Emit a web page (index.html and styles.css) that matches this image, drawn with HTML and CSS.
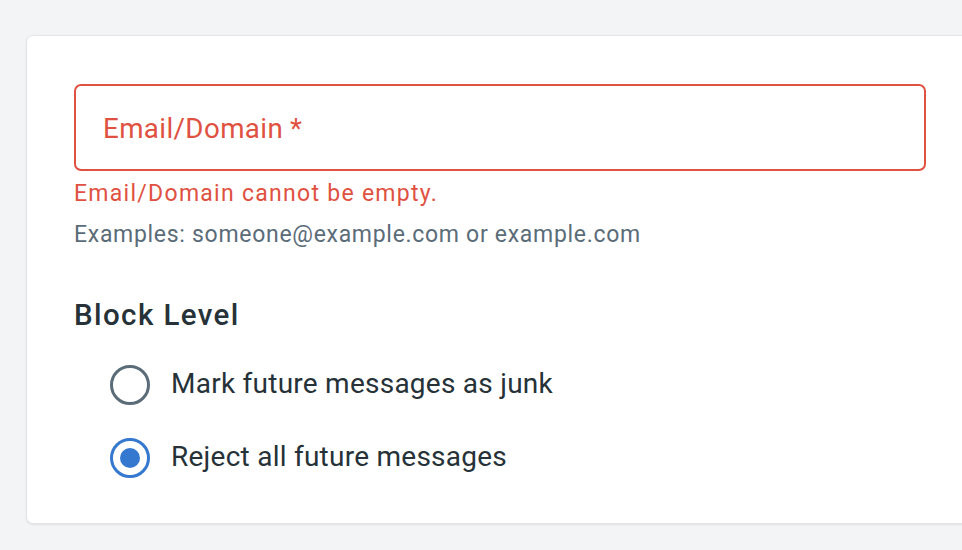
FILE: index.html
```html
<!DOCTYPE html>
<html>
<head>
<meta charset="utf-8">
<link rel="stylesheet" href="styles.css">
</head>
<body>
<div class="page">
  <div class="card">
    <div class="field">
      <div class="input">
        <span class="label">Email/Domain<span class="req">*</span></span>
      </div>
      <div class="error">Email/Domain cannot be empty.</div>
      <div class="hint">Examples: someone@example.com or example.com</div>
    </div>
    <div class="section">
      <div class="title">Block Level</div>
      <div class="options">
        <label class="option">
          <span class="radio"></span>
          <span class="opt-text">Mark future messages as junk</span>
        </label>
        <label class="option">
          <span class="radio checked"></span>
          <span class="opt-text">Reject all future messages</span>
        </label>
      </div>
    </div>
  </div>
</div>
</body>
</html>
```
FILE: styles.css
```css
html, body {
  margin: 0;
  padding: 0;
  background: #f3f4f6;
  overflow: hidden;
  font-family: Roboto, "Liberation Sans", sans-serif;
}
.page {
  width: 962px;
  height: 550px;
  padding: 35px 0 0 26px;
  box-sizing: border-box;
}
.card {
  width: 948px;
  height: 489px;
  box-sizing: border-box;
  background: #fff;
  border: 1px solid #e2e4e7;
  border-radius: 7px;
  box-shadow: 0 1px 2px rgba(0,0,0,0.08);
  padding: 48px 0 0 47px;
}
.field {
  width: 852px;
}
.input {
  height: 87px;
  box-sizing: border-box;
  border: 2px solid #df5141;
  border-radius: 7px;
  display: flex;
  align-items: center;
  padding-left: 27px;
}
.label {
  color: #df5141;
  font-size: 27.7px;
  letter-spacing: 0.4px;
  padding-top: 2px;
}
.req {
  margin-left: 7px;
}
.error {
  color: #df5141;
  font-size: 23px;
  letter-spacing: 1.28px;
  margin-top: 8px;
  line-height: 30px;
}
.hint {
  color: #5b6c79;
  font-size: 23px;
  letter-spacing: 0.7px;
  margin-top: 11px;
  line-height: 30px;
}
.section {
  margin-top: 47px;
}
.title {
  color: #263238;
  font-size: 29.5px;
  font-weight: 500;
  letter-spacing: 1.4px;
  line-height: 36px;
}
.options {
  margin-top: 32px;
  padding-left: 36px;
  display: flex;
  flex-direction: column;
  gap: 33px;
}
.option {
  display: flex;
  align-items: center;
  height: 40px;
}
.radio {
  width: 40px;
  height: 40px;
  box-sizing: border-box;
  border: 3px solid #5b6c79;
  border-radius: 50%;
  display: flex;
  align-items: center;
  justify-content: center;
  flex-shrink: 0;
}
.radio.checked {
  border-color: #3578cf;
}
.radio.checked::after {
  content: "";
  width: 20px;
  height: 20px;
  border-radius: 50%;
  background: #3578cf;
}
.opt-text {
  margin-left: 21px;
  color: #263238;
  font-size: 28px;
  letter-spacing: 0.25px;
  padding-bottom: 3px;
}
```
